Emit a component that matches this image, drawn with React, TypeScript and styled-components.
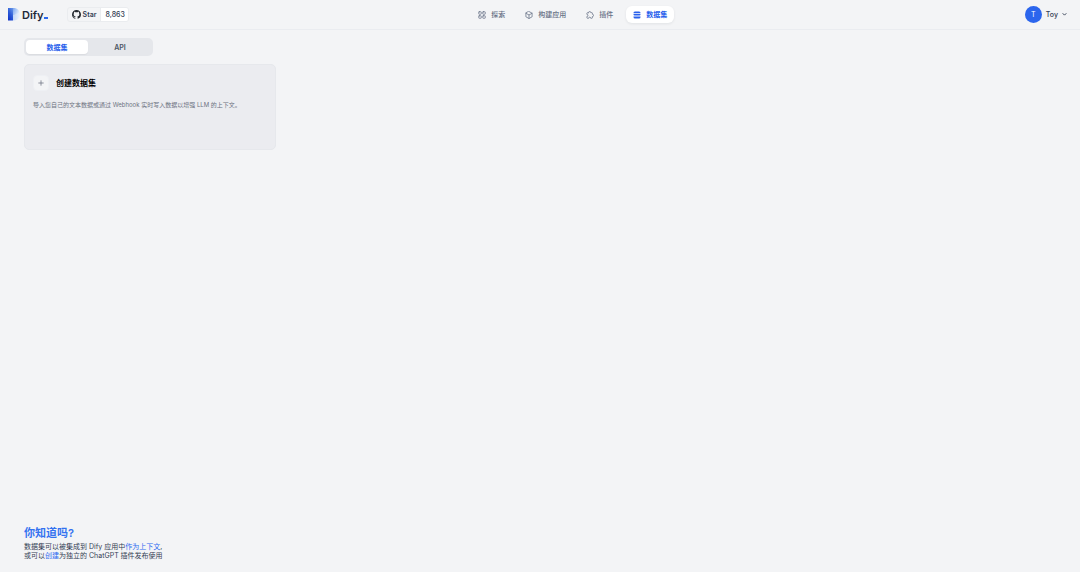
import React from 'react';
import styled, { createGlobalStyle } from 'styled-components';

const GlobalStyle = createGlobalStyle`
  *, *::before, *::after { box-sizing: border-box; }
  body {
    margin: 0;
    background: #f3f4f6;
    color: #1f2a37;
    font-family: Inter, "Noto Sans CJK SC", sans-serif;
    font-size: 7px;
    line-height: 10px;
    -webkit-font-smoothing: antialiased;
  }
  a { color: inherit; text-decoration: none; }
  button { font: inherit; color: inherit; border: 0; margin: 0; cursor: pointer; }
  h1, h2, p { margin: 0; }
`;

const Page = styled.div`
  display: flex;
  flex-direction: column;
  min-height: 100vh;
`;

const Header = styled.header`
  display: flex;
  align-items: center;
  justify-content: space-between;
  height: 30px;
  padding: 0 13px 0 8px;
  border-bottom: 1px solid #eaecf0;
`;

const Brand = styled.div`
  display: flex;
  align-items: center;
  gap: 19px;
`;

const Logo = styled.a`
  display: flex;
  align-items: center;
  gap: 2px;
  font-size: 11px;
  line-height: 14px;
  font-weight: 600;
  color: #1d2939;
`;

const Wordmark = styled.span`
  display: flex;
  align-items: baseline;
`;

const Cursor = styled.span`
  width: 4px;
  height: 2px;
  background: #2c68f0;
`;

const StarBadge = styled.a`
  display: flex;
  align-items: stretch;
  height: 15px;
  border: 1px solid #eaecef;
  border-radius: 3px;
  overflow: hidden;
  font-weight: 600;
  line-height: 13px;
  color: #344054;
`;

const StarLabel = styled.span`
  display: flex;
  align-items: center;
  gap: 2px;
  padding: 0 4px;
`;

const StarCount = styled.span`
  padding: 0 3px 0 4px;
  background: #fff;
  border-left: 1px solid #eaecef;
  font-weight: 500;
`;

const Nav = styled.nav`
  display: flex;
  gap: 6px;
  padding-right: 8px;
`;

const NavItem = styled.a<{ $active?: boolean }>`
  display: flex;
  align-items: center;
  gap: 5px;
  height: 17px;
  padding: 0 7px;
  border-radius: 6px;
  font-weight: ${(p) => (p.$active ? 700 : 500)};
  color: ${(p) => (p.$active ? '#2860ec' : '#667085')};
  background: ${(p) => (p.$active ? '#fff' : 'transparent')};
  box-shadow: ${(p) => (p.$active ? '0 1px 3px rgba(16, 24, 40, 0.08)' : 'none')};
`;

const Account = styled.button`
  display: flex;
  align-items: center;
  gap: 4px;
  padding: 0;
  background: none;
  color: #344054;
  font-weight: 500;
`;

const Avatar = styled.span`
  width: 17px;
  height: 17px;
  border-radius: 50%;
  background: #2b65ed;
  color: #fff;
  font-weight: 400;
  line-height: 17px;
  text-align: center;
`;

const Main = styled.main`
  display: flex;
  flex: 1;
  flex-direction: column;
  padding: 8px 24px 12px;
`;

const Tabs = styled.div`
  display: flex;
  align-self: flex-start;
  gap: 1px;
  padding: 2px;
  border-radius: 5px;
  background: #e5e7eb;
`;

const Tab = styled.button<{ $active?: boolean }>`
  width: 62px;
  height: 14px;
  padding: 1px 0 0;
  border-radius: 4px;
  font-weight: ${(p) => (p.$active ? 700 : 600)};
  color: ${(p) => (p.$active ? '#2860ec' : '#4b5563')};
  background: ${(p) => (p.$active ? '#fff' : 'transparent')};
  box-shadow: ${(p) => (p.$active ? '0 1px 1px rgba(16, 24, 40, 0.05)' : 'none')};
`;

const Grid = styled.section`
  display: grid;
  grid-template-columns: repeat(4, 1fr);
  gap: 8px;
  padding-top: 8px;
`;

const Card = styled.a`
  min-height: 86px;
  padding: 10px 8px;
  border: 1px solid #e6e8ec;
  border-radius: 5px;
  background: #ebecf0;
`;

const CardHead = styled.div`
  display: flex;
  align-items: center;
  gap: 7px;
  color: #000;
`;

const CardTitle = styled.h2`
  font-size: 8px;
  line-height: 12px;
  font-weight: 700;
`;

const PlusBox = styled.span`
  display: grid;
  place-items: center;
  width: 16px;
  height: 16px;
  border: 1px solid #eef0f4;
  border-radius: 4px;
  background: #f3f4f6;
  color: #6b7280;
`;

const CardText = styled.p`
  margin-top: 9px;
  font-size: 6px;
  color: #6b7280;
`;

const Tips = styled.footer`
  margin-top: auto;
  font-size: 7px;
  line-height: 9px;
  color: #344054;

  a { color: #2f6bf0; }
`;

const TipsTitle = styled.h1`
  margin-bottom: 1px;
  font-size: 11px;
  line-height: 16px;
  font-weight: 600;
  color: #3372f0;
`;

const Svg = ({ size = 8, children }: { size?: number; children: React.ReactNode }) => (
  <svg width={size} height={size} viewBox="0 0 16 16" fill="none" stroke="currentColor" strokeWidth="1.5" strokeLinecap="round" strokeLinejoin="round" aria-hidden="true">
    {children}
  </svg>
);

const DifyMark = () => (
  <svg width="12" height="13" viewBox="0 0 12 13" aria-hidden="true">
    <defs>
      <linearGradient id="stem" x1="0.8" y1="0" x2="0.2" y2="1">
        <stop offset="0" stopColor="#5f8fe6" />
        <stop offset="0.5" stopColor="#2c5bd8" />
        <stop offset="1" stopColor="#1034c8" />
      </linearGradient>
      <linearGradient id="bowl" x1="0" y1="0" x2="1" y2="0.4">
        <stop offset="0" stopColor="#6d99ea" />
        <stop offset="0.5" stopColor="#a6c4f5" />
        <stop offset="1" stopColor="#dce9fb" />
      </linearGradient>
      <linearGradient id="fade" x1="0" y1="0" x2="1" y2="0">
        <stop offset="0" stopColor="#c3d8f8" />
        <stop offset="1" stopColor="#eef3fa" />
      </linearGradient>
    </defs>
    <path d="M5 0h1c3.500 0 6 2.600 6 6.300S9.500 12.500 6 12.500H5z" fill="url(#fade)" />
    <path d="M4 0h2c3 0 5 2.200 5.300 4.500L6 7H4z" fill="url(#bowl)" />
    <path d="M0 0h5v12.500H0z" fill="url(#stem)" />
  </svg>
);

const GithubMark = () => (
  <svg width="9" height="9" viewBox="0 0 16 16" fill="#24292f" aria-hidden="true">
    <path d="M8 0C3.580 0 0 3.580 0 8c0 3.540 2.290 6.530 5.470 7.590.4.070.55-.17.55-.38 0-.19-.01-.82-.01-1.490-2.010.37-2.530-.49-2.690-.94-.09-.23-.48-.94-.82-1.130-.28-.15-.68-.52-.01-.53.63-.01 1.080.58 1.230.82.72 1.210 1.870.87 2.330.66.07-.52.28-.87.51-1.070-1.780-.2-3.640-.89-3.640-3.950 0-.87.31-1.590.82-2.150-.08-.2-.36-1.020.08-2.120 0 0 .67-.21 2.200.82.64-.18 1.320-.27 2-.27s1.360.09 2 .27c1.530-1.040 2.200-.82 2.200-.82.44 1.100.16 1.920.08 2.120.51.56.82 1.270.82 2.150 0 3.070-1.870 3.750-3.650 3.950.29.25.54.73.54 1.480 0 1.070-.01 1.930-.01 2.200 0 .21.15.46.55.38A8.010 8.010 0 0 0 16 8c0-4.420-3.580-8-8-8z" />
  </svg>
);

const GridIcon = () => (
  <Svg>
    <rect x="1.500" y="1.500" width="5" height="5" rx="1" />
    <rect x="9.500" y="1.500" width="5" height="5" rx="1" />
    <rect x="1.500" y="9.500" width="5" height="5" rx="1" />
    <rect x="9.500" y="9.500" width="5" height="5" rx="1" />
  </Svg>
);

const CubeIcon = () => (
  <Svg>
    <path d="M8 1l6.200 3.400v7.200L8 15l-6.200-3.400V4.400z" />
    <path d="M2 4.600L8 8l6-3.400M8 8v6.800" />
  </Svg>
);

const PuzzleIcon = () => (
  <Svg>
    <path d="M5 3.300a2.300 2.300 0 0 1 4.600 0h2a1.200 1.200 0 0 1 1.200 1.200v2a2.300 2.300 0 0 1 0 4.600v2.200a1.200 1.200 0 0 1-1.200 1.200H9.500a2.100 2.100 0 0 0-4.200 0H3a1.200 1.200 0 0 1-1.200-1.200V11a2.100 2.100 0 0 0 0-4.200V4.500A1.200 1.200 0 0 1 3 3.300z" />
  </Svg>
);

const DatabaseIcon = () => (
  <svg width="8" height="8" viewBox="0 0 16 16" fill="currentColor" aria-hidden="true">
    <path d="M4 1h8a3 3 0 0 1 3 3.400H1A3 3 0 0 1 4 1z" />
    <path d="M1 6.100h14v1a2 2 0 0 1-2 2H3a2 2 0 0 1-2-2z" />
    <path d="M1 10.800h14V12a3 3 0 0 1-3 3H4a3 3 0 0 1-3-3z" />
  </svg>
);

export default function App() {
  return (
    <Page>
      <GlobalStyle />
      <Header>
        <Brand>
          <Logo href="#">
            <DifyMark />
            <Wordmark>Dify<Cursor /></Wordmark>
          </Logo>
          <StarBadge href="#">
            <StarLabel><GithubMark />Star</StarLabel>
            <StarCount>8,863</StarCount>
          </StarBadge>
        </Brand>
        <Nav>
          <NavItem href="#"><GridIcon />探索</NavItem>
          <NavItem href="#"><CubeIcon />构建应用</NavItem>
          <NavItem href="#"><PuzzleIcon />插件</NavItem>
          <NavItem href="#" $active aria-current="page"><DatabaseIcon />数据集</NavItem>
        </Nav>
        <Account type="button">
          <Avatar>T</Avatar>
          <span>Toy</span>
          <Svg size={5}><path d="M3 5l5 5 5-5" strokeWidth="3" /></Svg>
        </Account>
      </Header>
      <Main>
        <Tabs role="tablist">
          <Tab type="button" role="tab" aria-selected="true" $active>数据集</Tab>
          <Tab type="button" role="tab" aria-selected="false">API</Tab>
        </Tabs>
        <Grid>
          <Card href="#">
            <CardHead>
              <PlusBox><Svg size={6}><path d="M8 2v12M2 8h12" strokeWidth="2" /></Svg></PlusBox>
              <CardTitle>创建数据集</CardTitle>
            </CardHead>
            <CardText>导入您自己的文本数据或通过 Webhook 实时写入数据以增强 LLM 的上下文。</CardText>
          </Card>
        </Grid>
        <Tips>
          <TipsTitle>你知道吗?</TipsTitle>
          <p>数据集可以被集成到 Dify 应用中<a href="#">作为上下文</a>,</p>
          <p>或可以<a href="#">创建</a>为独立的 ChatGPT 插件发布使用</p>
        </Tips>
      </Main>
    </Page>
  );
}
